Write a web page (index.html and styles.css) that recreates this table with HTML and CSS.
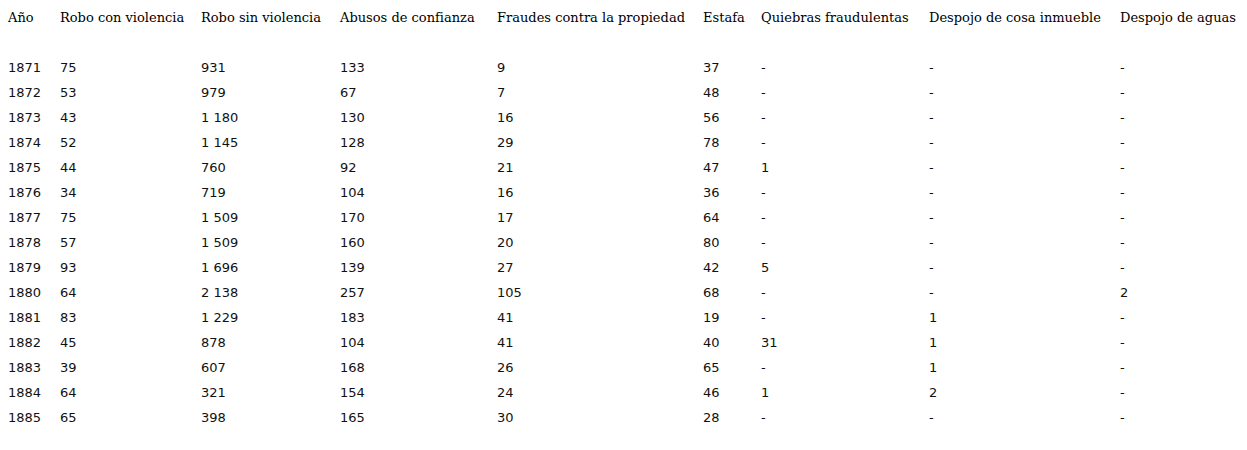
FILE: index.html
```html
<!DOCTYPE html>
<html lang="es">
<head>
<meta charset="utf-8">
<title>Delitos contra la propiedad</title>
<link rel="stylesheet" href="styles.css">
</head>
<body>
<table class="data">
  <colgroup>
    <col class="c1"><col class="c2"><col class="c3"><col class="c4"><col class="c5"><col class="c6"><col class="c7"><col class="c8"><col class="c9">
  </colgroup>
  <thead>
    <tr><th>Año</th><th>Robo con violencia</th><th>Robo sin violencia</th><th>Abusos de confianza</th><th>Fraudes contra la propiedad</th><th>Estafa</th><th>Quiebras fraudulentas</th><th>Despojo de cosa inmueble</th><th>Despojo de aguas</th></tr>
    <tr class="spacer"><td></td><td></td><td></td><td></td><td></td><td></td><td></td><td></td><td></td></tr>
  </thead>
  <tbody>
    <tr><td>1871</td><td>75</td><td>931</td><td>133</td><td>9</td><td>37</td><td>-</td><td>-</td><td>-</td></tr>
    <tr><td>1872</td><td>53</td><td>979</td><td>67</td><td>7</td><td>48</td><td>-</td><td>-</td><td>-</td></tr>
    <tr><td>1873</td><td>43</td><td>1 180</td><td>130</td><td>16</td><td>56</td><td>-</td><td>-</td><td>-</td></tr>
    <tr><td>1874</td><td>52</td><td>1 145</td><td>128</td><td>29</td><td>78</td><td>-</td><td>-</td><td>-</td></tr>
    <tr><td>1875</td><td>44</td><td>760</td><td>92</td><td>21</td><td>47</td><td>1</td><td>-</td><td>-</td></tr>
    <tr><td>1876</td><td>34</td><td>719</td><td>104</td><td>16</td><td>36</td><td>-</td><td>-</td><td>-</td></tr>
    <tr><td>1877</td><td>75</td><td>1 509</td><td>170</td><td>17</td><td>64</td><td>-</td><td>-</td><td>-</td></tr>
    <tr><td>1878</td><td>57</td><td>1 509</td><td>160</td><td>20</td><td>80</td><td>-</td><td>-</td><td>-</td></tr>
    <tr><td>1879</td><td>93</td><td>1 696</td><td>139</td><td>27</td><td>42</td><td>5</td><td>-</td><td>-</td></tr>
    <tr><td>1880</td><td>64</td><td>2 138</td><td>257</td><td>105</td><td>68</td><td>-</td><td>-</td><td>2</td></tr>
    <tr><td>1881</td><td>83</td><td>1 229</td><td>183</td><td>41</td><td>19</td><td>-</td><td>1</td><td>-</td></tr>
    <tr><td>1882</td><td>45</td><td>878</td><td>104</td><td>41</td><td>40</td><td>31</td><td>1</td><td>-</td></tr>
    <tr><td>1883</td><td>39</td><td>607</td><td>168</td><td>26</td><td>65</td><td>-</td><td>1</td><td>-</td></tr>
    <tr><td>1884</td><td>64</td><td>321</td><td>154</td><td>24</td><td>46</td><td>1</td><td>2</td><td>-</td></tr>
    <tr><td>1885</td><td>65</td><td>398</td><td>165</td><td>30</td><td>28</td><td>-</td><td>-</td><td>-</td></tr>
  </tbody>
</table>
</body>
</html>
```
FILE: styles.css
```css
html, body {
  background: #ffffff;
}
body {
  margin: 5px 8px 0 8px;
  color: #000000;
  font-family: "DejaVu Serif", "Liberation Serif", serif;
  font-size: 13px;
}
.data {
  border-collapse: collapse;
  table-layout: fixed;
  width: 1231px;
}
.data th,
.data td {
  padding: 0;
  height: 25px;
  text-align: left;
  vertical-align: middle;
  font-weight: normal;
  white-space: nowrap;
}
.data tbody td {
  font-family: "DejaVu Sans", "Liberation Sans", sans-serif;
  color: #111111;
}
.data .c1 { width: 52px; }
.data .c2 { width: 141px; }
.data .c3 { width: 139px; }
.data .c4 { width: 157px; }
.data .c5 { width: 206px; }
.data .c6 { width: 58px; }
.data .c7 { width: 168px; }
.data .c8 { width: 191px; }
.data .c9 { width: 119px; }
```
